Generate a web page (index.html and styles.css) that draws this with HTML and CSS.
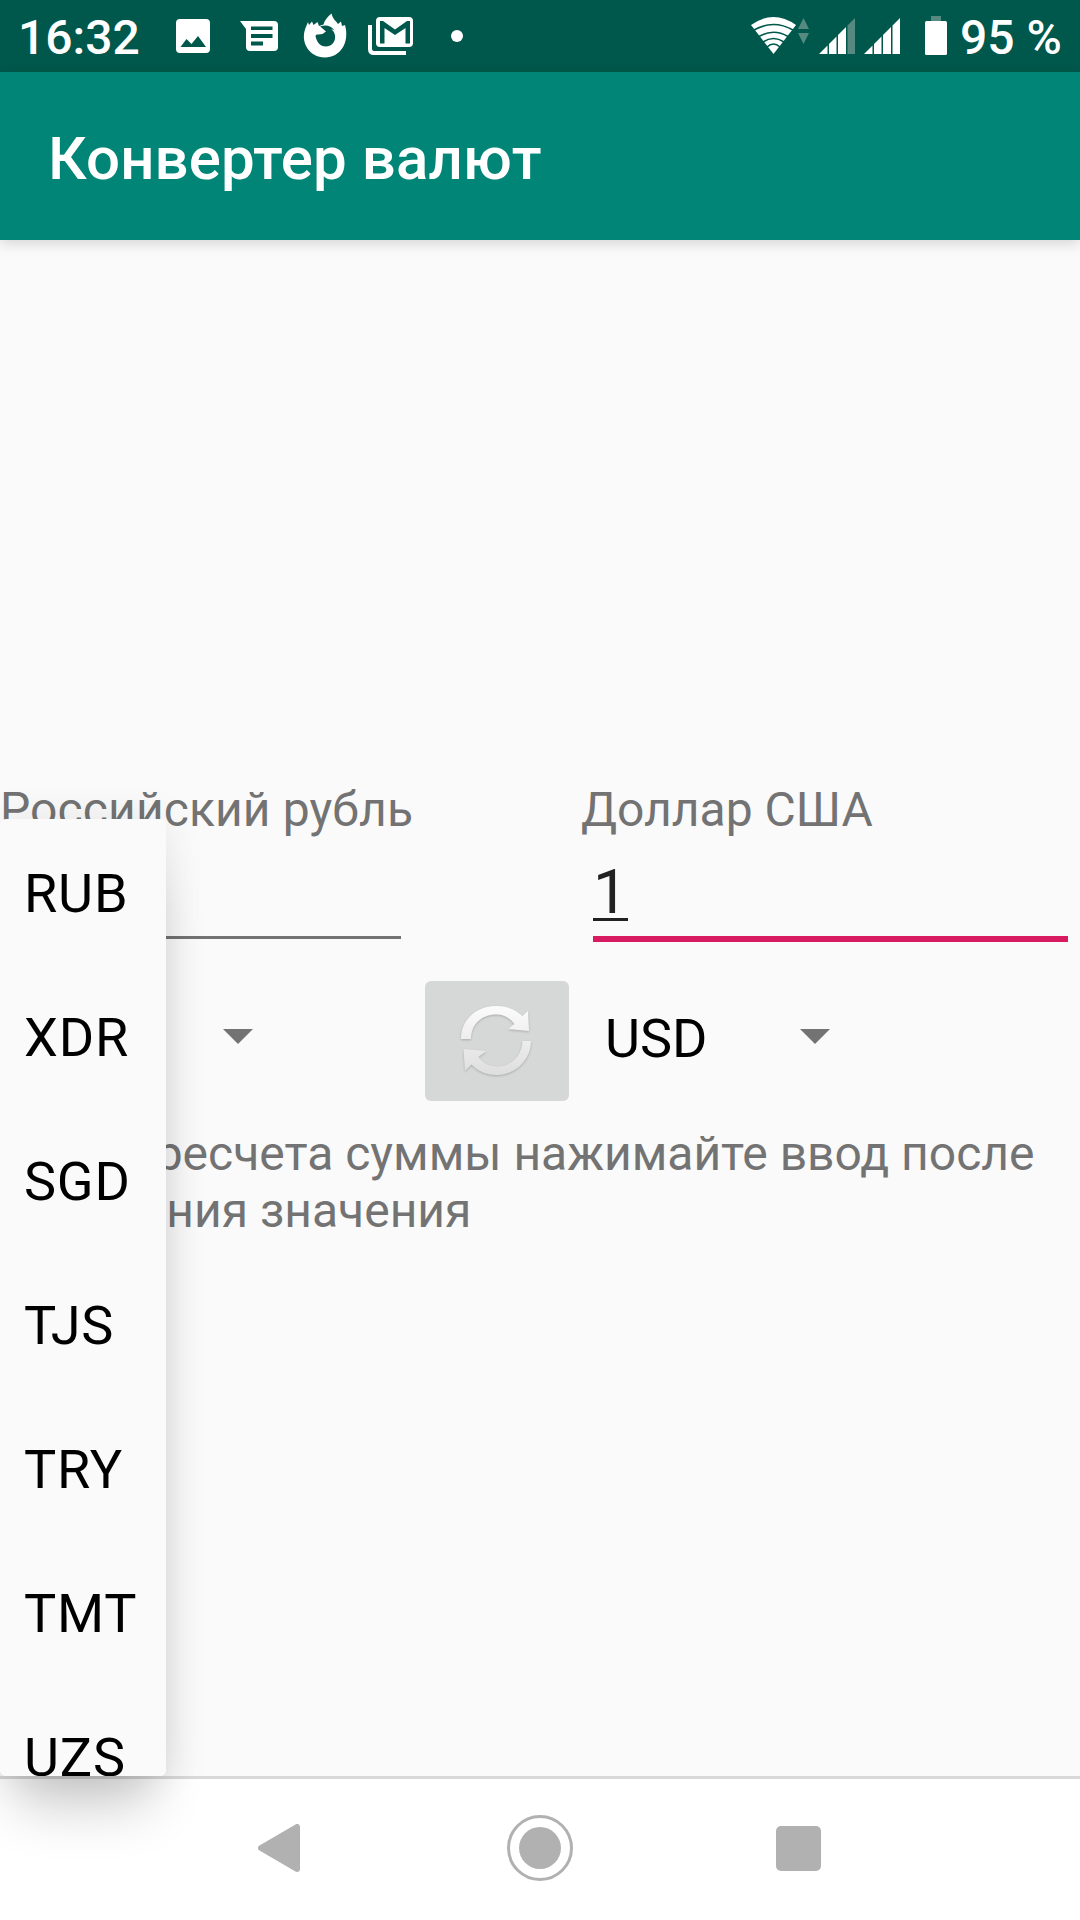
FILE: index.html
```html
<!DOCTYPE html>
<html lang="ru">
<head>
<meta charset="utf-8">
<title>Конвертер валют</title>
<link rel="stylesheet" href="styles.css">
</head>
<body>
<div class="screen">
  <header class="status-bar">
    <span class="clock">16:32</span>
    <div class="status-icons">
      <svg width="60" height="72" viewBox="168 0 60 72"><path fill="#fff" fill-rule="evenodd" d="M180 19H206Q210 19 210 23V49Q210 53 206 53H180Q176 53 176 49V23Q176 19 180 19ZM180.500 47H206L198 36L191.500 44L186.500 39Z"/></svg>
      <svg width="68" height="72" viewBox="228 0 68 72"><path fill="#fff" fill-rule="evenodd" d="M240 21H274Q278 21 278 25V47Q278 51 274 51H250Q246 51 246 47V29ZM251 26.500V30H272.500V26.500ZM251 34V38H272.500V34ZM251 41.500V45.500H263V41.500Z"/></svg>
      <svg width="62" height="72" viewBox="296 0 62 72"><path fill="#fff" fill-rule="evenodd" d="M309 25L312 21.500L313.500 25L317.500 22L319 26L323.500 24.500C324.500 20 328 16.500 331.500 13.500C332.500 17 333.500 19 336.500 22L338 24L341 21.500L342 26L345 25C350 43 340 57.500 325 57.500C309 57.500 300 42 305.500 28L308 22ZM320 26.500C322.500 28 324 30 326 31.500L322.500 34L318.500 34.500C316 34 315 35 316 38C317.500 43 321 46.500 326 46.500C337 46 338 32 329.500 28L334.500 30.500C331 25.500 326 24.500 320 26.500Z"/></svg>
      <svg width="78" height="72" viewBox="358 0 78 72"><path fill="#fff" fill-rule="evenodd" d="M380 17H409Q413 17 413 21V43Q413 47 409 47H380Q376 47 376 43V21Q376 17 380 17ZM380 21V43.500H384.500V28L395 35L405.500 28V43.500H410V21H407L395 29.500L383 21Z"/><path fill="none" stroke="#fff" stroke-width="4" d="M370 25V49Q370 53 374 53H406"/></svg>
      <svg width="40" height="72" viewBox="436 0 40 72"><circle cx="457" cy="36" r="6" fill="#fff"/></svg>
    </div>
    <div class="system-icons">
      <svg width="65" height="72" viewBox="748 0 65 72"><path fill="#fff" d="M751 25Q773.500 9 796 25L773.500 54Z"/><g fill="none" stroke="#00574b" stroke-width="1.600"><path d="M754 30Q773.500 19 793 30M759 36.500Q773.500 28 788 36.500M763 42Q773.500 35 784 42M767 47Q773.500 41 780 47"/></g><path fill="#56897f" d="M798 29L803.500 18L809 29ZM798 33H809L803.500 44Z"/></svg>
      <svg width="47" height="72" viewBox="813 0 47 72"><path fill="#fff" d="M819 54L827.500 45.500V54ZM829 54V44L836.500 36.500V54ZM838 54V35L846 27V54Z"/><path fill="#56897f" d="M847.500 54V25.500L855 18V54Z"/></svg>
      <svg width="50" height="72" viewBox="860 0 50 72"><path fill="#fff" d="M864 54L872.500 45.500V54ZM874 54V44L881.500 36.500V54ZM883 54V35L891 27V54ZM892.500 54V25.500L900 18V54Z"/></svg>
      <svg width="50" height="72" viewBox="910 0 50 72"><path fill="#56897f" d="M931 16H941V22H931Z"/><rect x="925" y="21" width="22" height="34" rx="1.500" fill="#fff"/></svg>
      <span class="battery-level">95 %</span>
    </div>
  </header>
  <div class="app-bar"><h1>Конвертер валют</h1></div>
  <main class="content">
    <div class="converter">
      <section class="currency currency-from">
        <p class="label">Российский рубль</p>
        <div class="amount"></div>
        <div class="spinner"><svg width="30" height="15" viewBox="0 0 30 15"><path fill="#737373" d="M0 0H30L15 15Z"/></svg></div>
      </section>
      <button class="swap" aria-label="Поменять валюты">
        <svg width="78" height="78" viewBox="458 1002 78 78">
          <defs><linearGradient id="metal" x1="0" y1="1005" x2="0" y2="1075" gradientUnits="userSpaceOnUse"><stop offset="0" stop-color="#fcfcfc"/><stop offset="1" stop-color="#dedede"/></linearGradient></defs>
          <g class="arrows" fill="url(#metal)">
            <path d="M461 1039C461 1019 477 1006 496 1006C508 1006 516 1010 522.500 1016L528 1011L529 1031L508 1029L514.500 1024C509 1017 503 1014.500 496 1014.500C481 1014.500 471 1025 471 1039Z"/>
            <path d="M531 1041C531 1060 515 1075 497 1075C486 1075 478 1071 471.500 1064.500L465 1071L463.500 1049L486 1051L478.500 1057C483 1063 489 1066.500 497 1066.500C511 1066.500 522 1056 522.500 1041Z"/>
          </g>
        </svg>
      </button>
      <section class="currency currency-to">
        <p class="label">Доллар США</p>
        <div class="amount focused"><span class="composing">1</span></div>
        <div class="spinner"><span class="code">USD</span><svg width="30" height="15" viewBox="0 0 30 15"><path fill="#737373" d="M0 0H30L15 15Z"/></svg></div>
      </section>
    </div>
    <p class="hint">Для пересчета суммы нажимайте ввод после изменения значения</p>
  </main>
  <nav class="nav-bar">
    <svg width="42" height="48" viewBox="258 1824 42 48"><path fill="#b1b1b1" stroke="#b1b1b1" stroke-width="6" stroke-linejoin="round" d="M261 1848L297 1827V1869Z"/></svg>
    <svg width="66" height="66" viewBox="0 0 66 66"><circle cx="33" cy="33" r="31.500" fill="none" stroke="#b1b1b1" stroke-width="3"/><circle cx="33" cy="33" r="21" fill="#b1b1b1"/></svg>
    <span class="recents"></span>
  </nav>
  <ul class="dropdown">
    <li>RUB</li><li>XDR</li><li>SGD</li><li>TJS</li><li>TRY</li><li>TMT</li><li>UZS</li>
  </ul>
  <div class="dropdown-shade"></div>
</div>
</body>
</html>
```

FILE: styles.css
```css
* { box-sizing: border-box; margin: 0; padding: 0; }
body { font-family: Roboto, sans-serif; background: #fafafa; }
svg { display: block; flex: none; }
.screen { position: relative; width: 1080px; height: 1920px; overflow: hidden; display: flex; flex-direction: column; background: #fafafa; }

.status-bar { height: 72px; flex: none; display: flex; background: #00574b; color: #fff; font-size: 48px; font-weight: 500; line-height: 75px; white-space: nowrap; }
.clock { width: 168px; padding-left: 18px; }
.status-icons { display: flex; width: 580px; }
.system-icons { display: flex; }

.app-bar { position: relative; height: 168px; flex: none; padding-left: 48px; background: #008577; color: #fff; box-shadow: 0 4px 12px rgba(0, 0, 0, .14); }
.app-bar h1 { font-size: 60px; font-weight: 500; line-height: 174px; letter-spacing: .12px; }

.content { flex: 1; padding-top: 541px; color: #737373; }
.converter { display: grid; grid-template-columns: 425px 144px 511px; align-items: end; }
.currency-from { padding-right: 12px; }
.currency-from .label { letter-spacing: .12px; }
.currency-to { padding-left: 12px; }
.label { height: 57px; font-size: 48px; line-height: 57px; white-space: nowrap; }
.amount { height: 101px; margin: 0 12px; padding-top: 18px; border-bottom: 3px solid #737373; color: #212121; font-size: 62px; line-height: 72px; }
.amount.focused { height: 104px; border-bottom: 6px solid #d81b60; }
.composing { display: inline-block; height: 65px; border-bottom: 3px solid #212121; }
.spinner { height: 168px; display: flex; align-items: flex-start; padding: 90px 0 0 223px; }
.currency-to .spinner { height: 165px; padding: 87px 0 0 24px; }
.code { width: 195px; height: 60px; margin-top: -22px; color: #000; font-size: 54px; line-height: 63px; }
.swap { width: 144px; height: 120px; margin-bottom: 6px; padding: 0; display: grid; place-items: center; border: 0; border-radius: 6px; background: #d6d8d7; }
.arrows { filter: drop-shadow(0 1px 1px rgba(0, 0, 0, .2)); }
.hint { padding: 18px 24px 0 0; font-size: 48px; line-height: 57px; }

.nav-bar { height: 144px; flex: none; display: flex; align-items: center; gap: 207px; padding: 0 0 3px 258px; border-top: 3px solid #d9d9d9; background: #fff; }
.recents { width: 45px; height: 45px; margin-left: -4.5px; border-radius: 5px; background: #b1b1b1; }

.dropdown { position: absolute; left: 0; top: 819px; width: 166px; height: 957px; overflow: hidden; z-index: 2; padding-top: 3px; list-style: none; background: #fafafa; border-radius: 6px; color: #000; font-size: 54px; letter-spacing: .8px; }
.dropdown li { height: 144px; padding-left: 24px; line-height: 144px; }
.dropdown-shade { position: absolute; left: 0; top: 819px; width: 166px; height: 957px; z-index: 1; border-radius: 6px; box-shadow: 0 46px 54px -16px rgba(0, 0, 0, .2), 0 0 40px rgba(0, 0, 0, .09); }
```
